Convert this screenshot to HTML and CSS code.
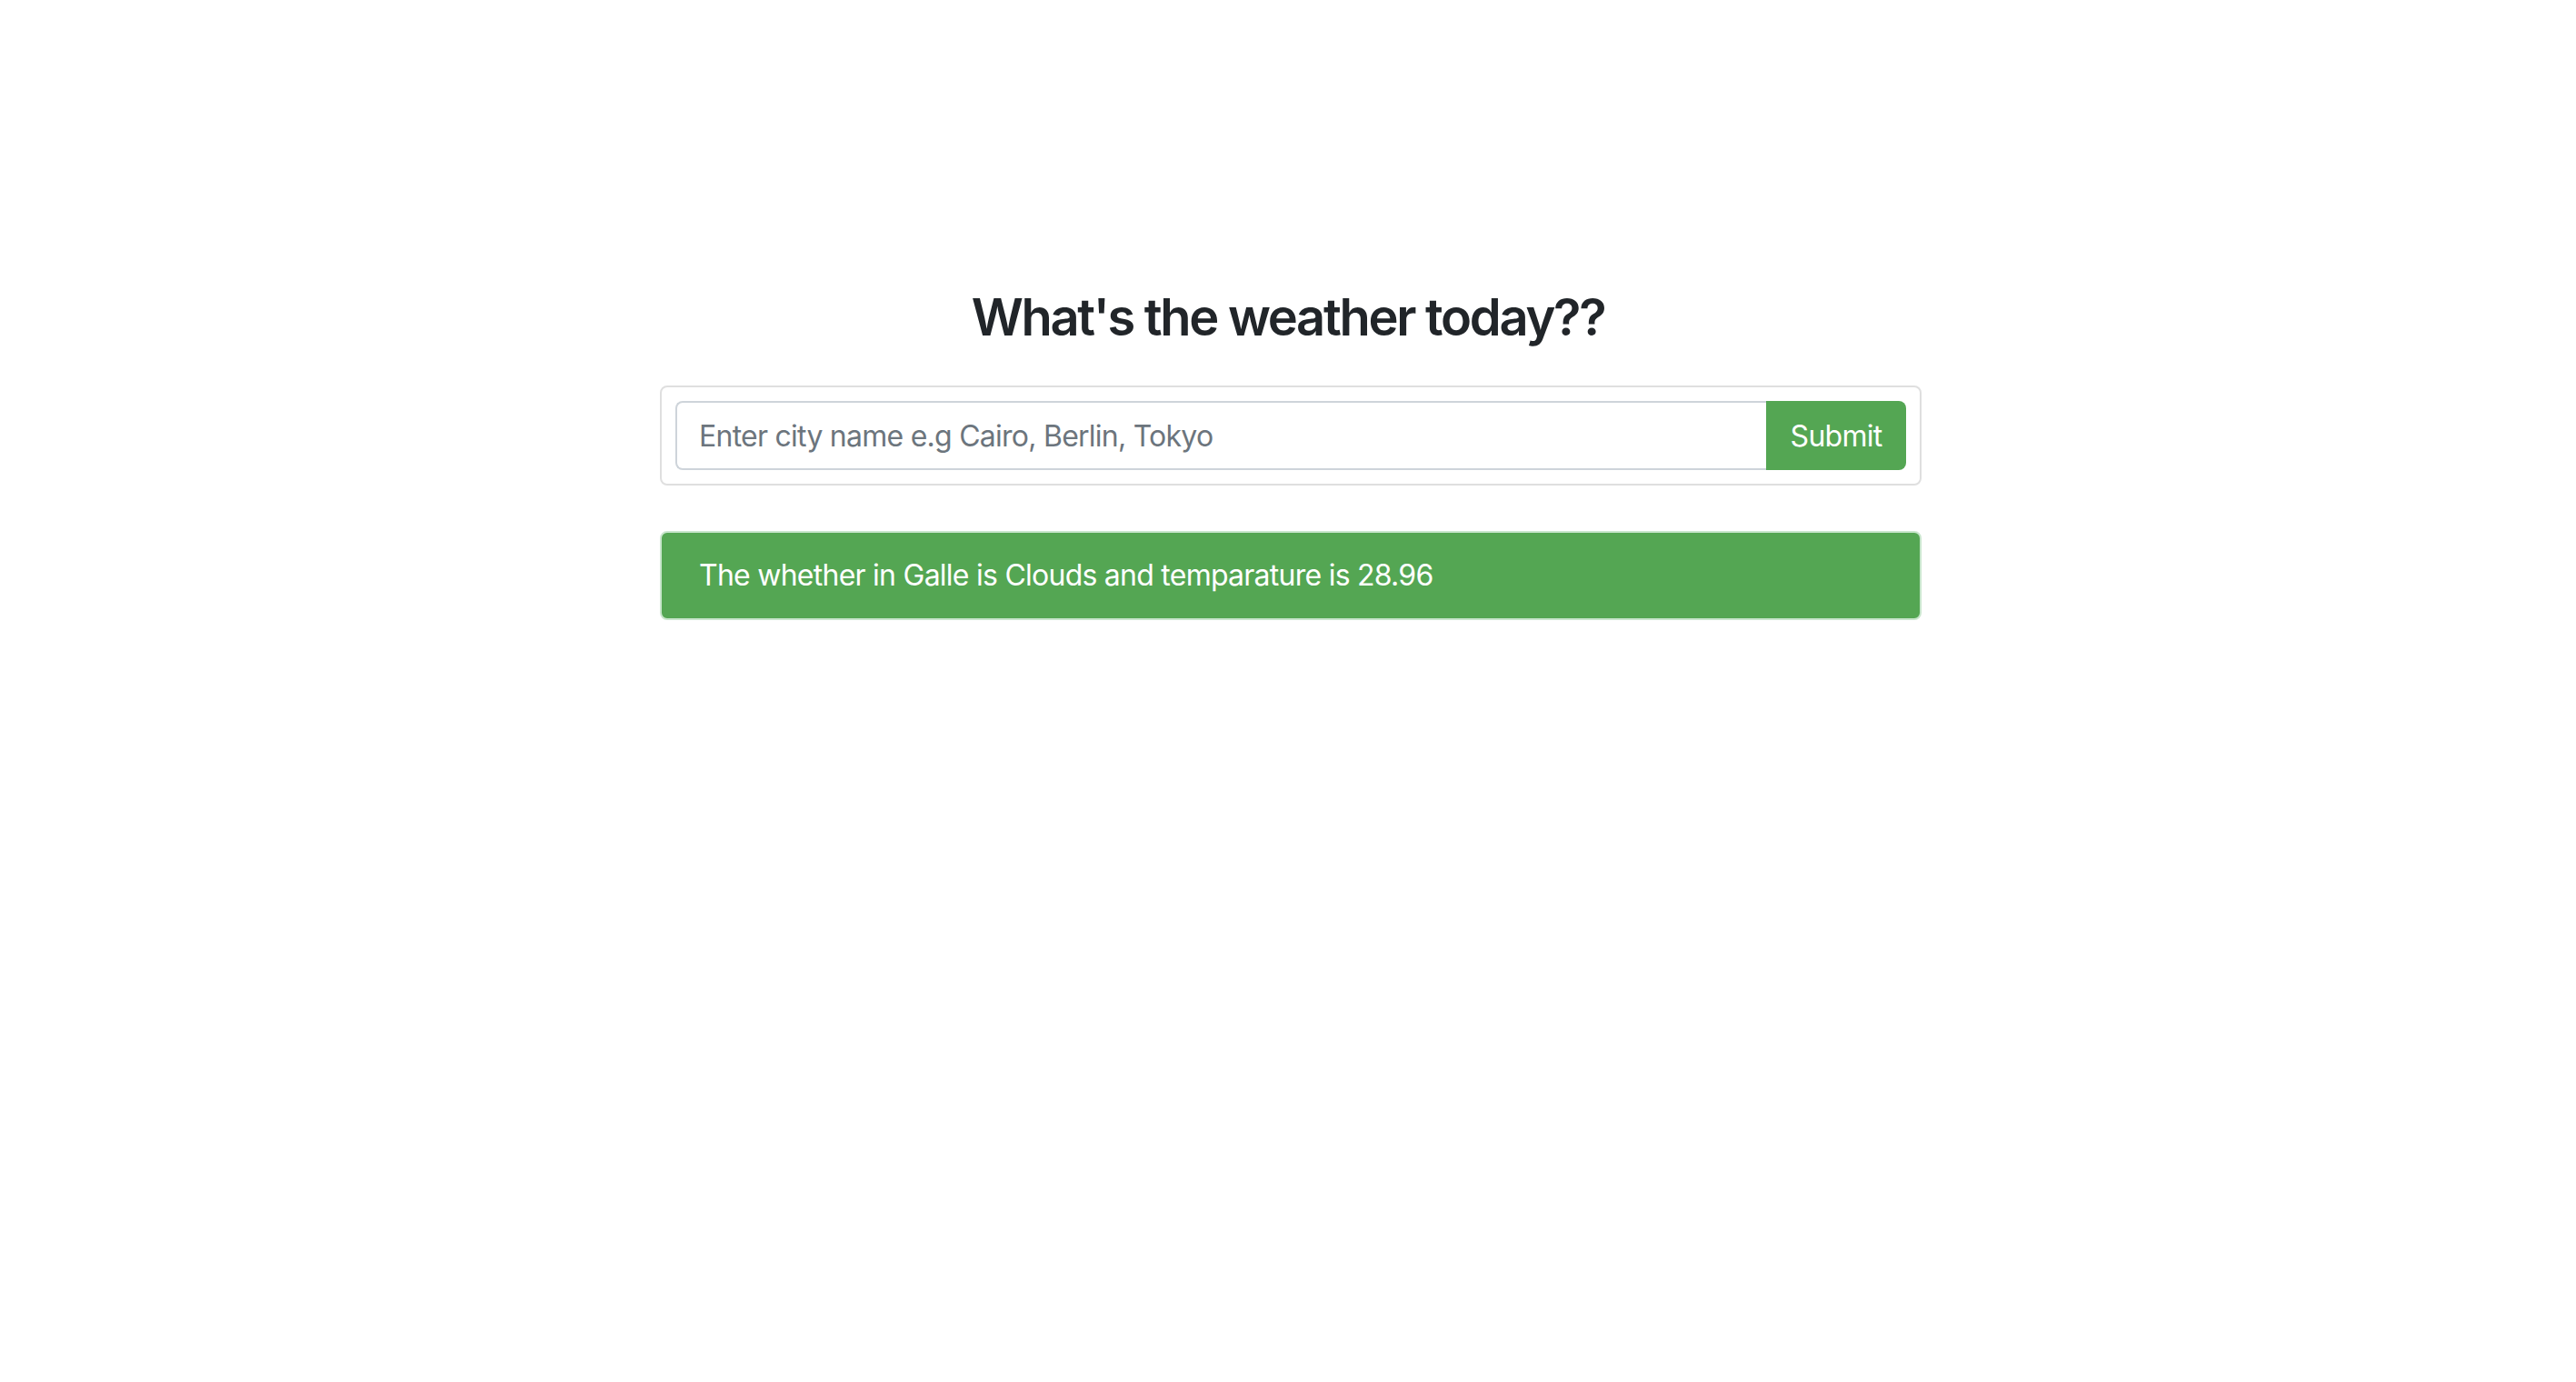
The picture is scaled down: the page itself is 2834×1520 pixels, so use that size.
FILE: index.html
```html
<!DOCTYPE html>
<html lang="en">
<head>
<meta charset="utf-8">
<title>Weather</title>
<link rel="stylesheet" href="styles.css">
</head>
<body>
  <main class="page">
    <h1 class="title">What's the weather today??</h1>
    <div class="panel">
      <form class="search-card" onsubmit="return false">
        <input class="city-input" type="text" placeholder="Enter city name e.g Cairo, Berlin, Tokyo">
        <button class="submit-btn" type="submit">Submit</button>
      </form>
      <div class="result-alert">The whether in Galle is Clouds and temparature is 28.96</div>
    </div>
  </main>
</body>
</html>
```
FILE: styles.css
```css
* { box-sizing: border-box; }
html, body { margin: 0; padding: 0; background: #fff; }
body {
  font-family: Inter, "Noto Sans", "Liberation Sans", sans-serif;
  color: #212529;
  width: 2834px;
  height: 1520px;
}
.page {
  padding-top: 316px;
  display: flex;
  flex-direction: column;
  align-items: center;
}
.title {
  margin: 0 0 41px 0;
  font-size: 56px;
  font-weight: 600;
  line-height: 1.2;
  letter-spacing: -2.3px;
  color: #212529;
  text-align: center;
}
.panel {
  width: 1388px;
  margin-left: 6px;
  display: flex;
  flex-direction: column;
  gap: 50px;
}
.search-card {
  margin: 0;
  border: 2px solid #dfdfdf;
  border-radius: 8px;
  padding: 15px;
  display: flex;
  align-items: stretch;
}
.city-input {
  flex: 1;
  height: 76px;
  border: 2px solid #ced4da;
  border-right: none;
  border-radius: 8px 0 0 8px;
  padding: 0 24px;
  font-family: inherit;
  font-size: 32px;
  letter-spacing: -0.75px;
  color: #495057;
  outline: none;
  background: #fff;
}
.city-input::placeholder { color: #6c757d; opacity: 1; }
.submit-btn {
  width: 154px;
  height: 76px;
  border: none;
  border-radius: 0 8px 8px 0;
  background: #54a653;
  color: #fff;
  font-family: inherit;
  font-size: 32px;
  font-weight: 400;
  letter-spacing: -0.75px;
  padding: 0;
  cursor: pointer;
}
.result-alert {
  background: #54a653;
  border: 2px solid #c9e6cd;
  border-radius: 8px;
  padding: 23px 41px;
  font-size: 32px;
  line-height: 48px;
  letter-spacing: -0.75px;
  color: #fff;
}
```
